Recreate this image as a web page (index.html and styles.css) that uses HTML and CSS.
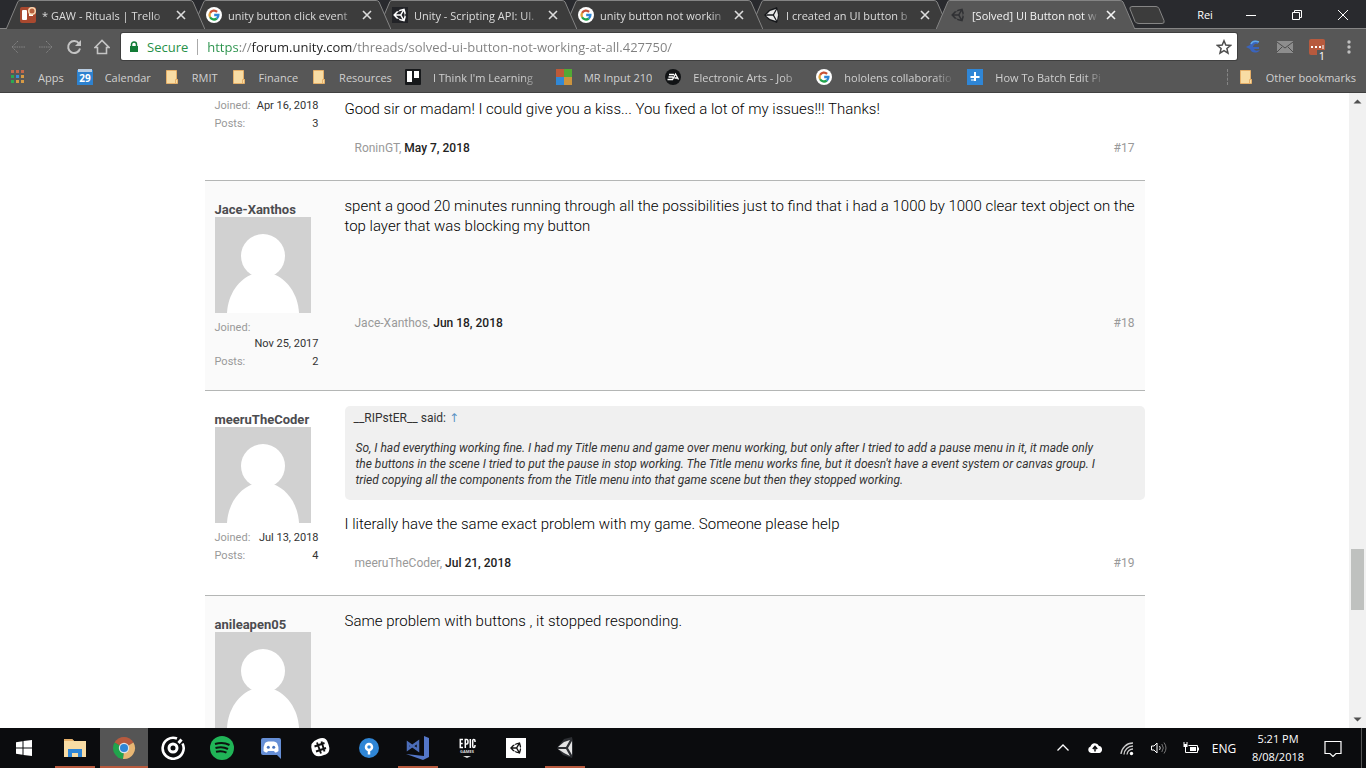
FILE: index.html
```html
<!DOCTYPE html>
<html lang="en">
<head>
<meta charset="utf-8">
<title>[Solved] UI Button not working at all</title>
<link rel="stylesheet" href="styles.css">
</head>
<body>
<svg class="defs" aria-hidden="true">
  <symbol id="google" viewBox="0 0 16 16">
    <circle cx="8" cy="8" r="8" fill="#fff"/>
    <g fill="none" stroke-width="2.3">
      <path d="M11.1 4.8A4.5 4.5 0 0 0 4.1 5.8" stroke="#c95337"/>
      <path d="M4.1 5.8a4.5 4.5 0 0 0 0 4.4" stroke="#e0a13d"/>
      <path d="M4.1 10.2a4.5 4.5 0 0 0 6.7 1.3" stroke="#21a44c"/>
      <path d="M10.8 11.5A4.5 4.5 0 0 0 12.4 8H8.2" stroke="#2f86d6"/>
    </g>
  </symbol>
  <symbol id="unity" viewBox="1 1 20 22">
    <path d="M9.11 17H6.5l-4.91-5L6.5 7h2.61l1.31-2.26L17.21 3l1.87 6.74L17.77 12l1.31 2.26L17.21 21l-6.79-1.74L9.11 17m.14-.25l5.13 1.38L11.42 13H5.5l3.75 3.75m6.87.38l1.38-5.13-1.38-5.13L13.15 12l2.97 5.13M9.25 7.25L5.5 11h5.92l2.96-5.13-5.13 1.38z"/>
  </symbol>
  <symbol id="unity-solid" viewBox="0 0 16 16">
    <path d="M0 8L5 3l8-3 2 7-1 1 1 1-2 7-8-3z" fill="#15171a"/>
    <path d="M2 8l4-4 6-2-3 5.200H2zM2 8.800h7L12 14l-6-2zM10 8l3-5.500L14 8l-1 5.500z" fill="#e8e8e8"/>
  </symbol>
  <symbol id="close" viewBox="0 0 10 10"><path d="M1 1l8 8M9 1L1 9" fill="none" stroke="currentColor" stroke-width="1.6"/></symbol>
  <symbol id="tab" viewBox="0 0 200 29" preserveAspectRatio="none"><path d="M0 29.500L12 1.500Q13 .5 14 .5H185Q187 .5 188 2L200 29.500"/></symbol>
  <symbol id="folder" viewBox="0 0 16 16"><path d="M2.500 1.500h10v9h1v4h-11z" fill="#f8dca4" stroke="#e6b069"/><path d="M11.500 14v-3.500h2" fill="none" stroke="#e6b069"/></symbol>
  <symbol id="avatar" viewBox="0 0 96 96"><path fill="#d1d1d1" d="M0 0h96v96H0z"/><circle cx="48" cy="39" r="22" fill="#fff"/><path d="M12 96C13 77 24 62 38 57h20c14 5 25 20 26 39z" fill="#fff"/></symbol>
</svg>

<header class="browser">
  <div class="tabstrip">
    <div class="tabs">
      <div class="tab"><svg class="shape"><use href="#tab"/></svg><div class="tab-in">
        <svg class="fav" viewBox="0 0 16 16"><rect width="16" height="16" rx="2" fill="#a9492f"/><rect x="2" y="3" width="5" height="10" rx="1" fill="#fff"/><path d="M9 6h4v3H9z" fill="#fff"/><circle cx="12" cy="4" r="4" fill="#f5d8b2"/><circle cx="12" cy="4" r="2.500" fill="#b9603d"/></svg>
        <span class="title">* GAW - Rituals | Trello</span><button class="x" aria-label="Close tab"><svg><use href="#close"/></svg></button></div></div>
      <div class="tab"><svg class="shape"><use href="#tab"/></svg><div class="tab-in">
        <svg class="fav"><use href="#google"/></svg><span class="title">unity button click event</span><button class="x" aria-label="Close tab"><svg><use href="#close"/></svg></button></div></div>
      <div class="tab"><svg class="shape"><use href="#tab"/></svg><div class="tab-in">
        <svg class="fav dark-fav"><use href="#unity"/></svg><span class="title">Unity - Scripting API: UI.</span><button class="x" aria-label="Close tab"><svg><use href="#close"/></svg></button></div></div>
      <div class="tab"><svg class="shape"><use href="#tab"/></svg><div class="tab-in">
        <svg class="fav"><use href="#google"/></svg><span class="title">unity button not workin</span><button class="x" aria-label="Close tab"><svg><use href="#close"/></svg></button></div></div>
      <div class="tab"><svg class="shape"><use href="#tab"/></svg><div class="tab-in">
        <svg class="fav"><use href="#unity-solid"/></svg><span class="title">I created an UI button b</span><button class="x" aria-label="Close tab"><svg><use href="#close"/></svg></button></div></div>
      <div class="tab active"><svg class="shape"><use href="#tab"/></svg><div class="tab-in">
        <svg class="fav faded"><use href="#unity"/></svg><span class="title">[Solved] UI Button not w</span><button class="x" aria-label="Close tab"><svg><use href="#close"/></svg></button></div></div>
    </div>
    <button class="newtab" aria-label="New tab"><svg viewBox="0 0 36 18"><path d="M3 .5h24q2 0 3 2l5 12q1 3-2 3H10q-3 0-4-2L1 3q-1-2 2-2.500z" fill="#3c3c3c" stroke="#858585"/></svg></button>
    <button class="profile">Rei</button>
    <button class="win" aria-label="Minimize"><svg viewBox="0 0 10 10"><path d="M0 5.500h10"/></svg></button>
    <button class="win" aria-label="Restore"><svg viewBox="0 0 10 10"><path d="M.5 2.500h7v7h-7zM2.500 2V.5h7v7H8"/></svg></button>
    <button class="win" aria-label="Close"><svg viewBox="0 0 10 10"><path d="M0 0l10 10M10 0L0 10"/></svg></button>
  </div>

  <div class="toolbar">
    <button class="nav" aria-label="Back"><svg viewBox="0 0 16 16"><path d="M15 8H2M8 2L2 8l6 6" stroke="#858585" stroke-dasharray="1.500 .8"/></svg></button>
    <button class="nav" aria-label="Forward"><svg viewBox="0 0 16 16"><path d="M1 8h13M8 2l6 6-6 6" stroke="#858585" stroke-dasharray="1.500 .8"/></svg></button>
    <button class="nav" aria-label="Reload"><svg viewBox="0 0 16 16"><path d="M13 4.500A6 6 0 1 0 14 9.500" stroke="#c4c4c4" stroke-width="2"/><path d="M15 1v6H9z" fill="#c4c4c4"/></svg></button>
    <button class="nav" aria-label="Home"><svg viewBox="0 0 16 16"><path d="M1 8.500L8 1.500l7 7H12.500V14.500h-9V8.500z" stroke="#c4c4c4" stroke-width="1.600"/></svg></button>
    <div class="omnibox">
      <svg class="lock" viewBox="0 0 10 12"><path d="M1 5h8v6H1z" fill="#137c37"/><path d="M2.500 5V3.500a2.500 2.500 0 0 1 5 0V5" fill="none" stroke="#137c37" stroke-width="1.500"/></svg>
      <span class="secure">Secure</span>
      <input class="url" type="text" aria-label="Address" value="https://forum.unity.com/threads/solved-ui-button-not-working-at-all.427750/">
      <button class="star" aria-label="Bookmark this page"><svg viewBox="0 0 16 16"><path d="M8 1.800l1.800 4.300 4.700.4-3.600 3 1.100 4.600L8 11.700l-4 2.400 1.100-4.600-3.600-3 4.700-.4z" fill="none" stroke="#4d4d4d" stroke-width="1.500"/></svg></button>
    </div>
    <div class="exts">
      <button aria-label="Extension"><svg viewBox="0 0 16 16"><path d="M13 2Q6 0 5 6l-4 2 4 2q2 5 8 3l2-2q-5 2-6-1h5V8H8q1-4 5-3z" fill="#3a64bd"/><path d="M6 5q2-4 8-2" fill="none" stroke="#62a9e8" stroke-width="1.500"/></svg></button>
      <button aria-label="Mail"><svg viewBox="0 0 16 12"><path d="M0 0h16v12H0z" fill="#8d8d8d"/><path d="M0 1l8 6 8-6M0 11l5-5M16 11l-5-5" fill="none" stroke="#4c4c4c"/></svg></button>
      <button class="pass" aria-label="Password manager, 1 match"><svg viewBox="0 0 16 16"><rect width="16" height="16" rx="2" fill="#b75a3e"/><path d="M2 7h2v2H2zM6 7h2v2H6zM10 7h2v2h-2zM13.500 6h1v4h-1z" fill="#fff"/></svg><span>1</span></button>
      <button aria-label="Menu"><svg viewBox="0 0 16 16"><g fill="#c0c0c0"><circle cx="8" cy="3" r="1.700"/><circle cx="8" cy="8" r="1.700"/><circle cx="8" cy="13" r="1.700"/></g></svg></button>
    </div>
  </div>

  <nav class="bookmarks" aria-label="Bookmarks">
    <a href="#"><svg viewBox="0 0 16 16"><path d="M1 1h3v3H1zM6 1h3v3H6zM11 1h3v3h-3z" fill="#c4674a"/><path d="M1 6h3v3H1zM1 11h3v3H1z" fill="#2aa952"/><path d="M6 6h3v3H6z" fill="#388fd9"/><path d="M11 6h3v3h-3zM6 11h3v3H6zM11 11h3v3h-3z" fill="#d79a44"/></svg><span>Apps</span></a>
    <a href="#"><svg viewBox="0 0 16 16"><path d="M0 1h16v15H0z" fill="#2d82d0"/><path d="M1 0h14v3H1z" fill="#b8cde3"/><text x="8" y="13" text-anchor="middle" class="cal">29</text></svg><span>Calendar</span></a>
    <a href="#"><svg><use href="#folder"/></svg><span>RMIT</span></a>
    <a href="#"><svg><use href="#folder"/></svg><span>Finance</span></a>
    <a href="#"><svg><use href="#folder"/></svg><span>Resources</span></a>
    <a href="#" class="long"><svg viewBox="0 0 16 16"><rect width="16" height="16" rx="1" fill="#17191b"/><path d="M2 2h5v11H2zM9 2h5v7H9z" fill="#fff"/></svg><span>I Think I'm Learning</span></a>
    <a href="#"><svg viewBox="0 0 16 16"><path d="M0 0h8v8H0z" fill="#bd5a39"/><path d="M8 0h8v8H8z" fill="#52a935"/><path d="M0 8h8v8H0z" fill="#3188d6"/><path d="M8 8h8v8H8z" fill="#cc943e"/></svg><span>MR Input 210</span></a>
    <a href="#" class="long"><svg viewBox="0 0 16 16"><circle cx="8" cy="8" r="8" fill="#111315"/><path d="M4 5.500h5M3.500 8h4.500M2.500 10.500h5L10.500 5l3 5.500M9.500 9h3" fill="none" stroke="#fff" stroke-width="1.300"/></svg><span>Electronic Arts - Job</span></a>
    <a href="#" class="long"><svg><use href="#google"/></svg><span>hololens collaboratio</span></a>
    <a href="#" class="long"><svg viewBox="0 0 16 16"><path d="M0 0h16v16H0z" fill="#2f86d6"/><path d="M8 3v9M3.500 8h9" stroke="#fff" stroke-width="2"/><path d="M4 11h5" stroke="#fff"/></svg><span>How To Batch Edit Pi</span></a>
    <a href="#" class="other"><svg><use href="#folder"/></svg><span>Other bookmarks</span></a>
  </nav>
</header>

<div class="page">
  <main class="thread">
    <article class="post clipped">
      <aside class="user">
        <dl><div><dt>Joined:</dt><dd>Apr 16, 2018</dd></div><div><dt>Posts:</dt><dd>3</dd></div></dl>
      </aside>
      <div class="body">
        <p class="message">Good sir or madam! I could give you a kiss... You fixed a lot of my issues!!! Thanks!</p>
        <footer><span><a href="#">RoninGT,</a> <b>May 7, 2018</b></span><a href="#">#17</a></footer>
      </div>
    </article>
    <article class="post alt">
      <aside class="user">
        <a class="name" href="#">Jace-Xanthos</a>
        <svg class="avatar"><use href="#avatar"/></svg>
        <dl><div><dt>Joined:</dt><dd>Nov 25, 2017</dd></div><div><dt>Posts:</dt><dd>2</dd></div></dl>
      </aside>
      <div class="body">
        <p class="message">spent a good 20 minutes running through all the possibilities just to find that i had a 1000 by 1000 clear text object on the top layer that was blocking my button</p>
        <footer><span><a href="#">Jace-Xanthos,</a> <b>Jun 18, 2018</b></span><a href="#">#18</a></footer>
      </div>
    </article>
    <article class="post">
      <aside class="user">
        <a class="name" href="#">meeruTheCoder</a>
        <svg class="avatar"><use href="#avatar"/></svg>
        <dl><div><dt>Joined:</dt><dd>Jul 13, 2018</dd></div><div><dt>Posts:</dt><dd>4</dd></div></dl>
      </aside>
      <div class="body">
        <div class="message">
          <blockquote>
            <div class="said">__RIPstER__ said: <a href="#">↑</a></div>
            <p>So, I had everything working fine. I had my Title menu and game over menu working, but only after I tried to add a pause menu in it, it made only the buttons in the scene I tried to put the pause in stop working. The Title menu works fine, but it doesn't have a event system or canvas group. I tried copying all the components from the Title menu into that game scene but then they stopped working.</p>
          </blockquote>
          <p>I literally have the same exact problem with my game. Someone please help</p>
        </div>
        <footer><span><a href="#">meeruTheCoder,</a> <b>Jul 21, 2018</b></span><a href="#">#19</a></footer>
      </div>
    </article>
    <article class="post alt">
      <aside class="user">
        <a class="name" href="#">anileapen05</a>
        <svg class="avatar"><use href="#avatar"/></svg>
      </aside>
      <div class="body">
        <p class="message">Same problem with buttons , it stopped responding.</p>
      </div>
    </article>
  </main>
  <div class="scrollbar" aria-hidden="true">
    <svg viewBox="0 0 17 17"><path d="M4.500 10.500h8l-4-4z" fill="#505050"/></svg>
    <div class="track"><div class="thumb"></div></div>
    <svg viewBox="0 0 17 17"><path d="M4.500 6.500h8l-4 4z" fill="#505050"/></svg>
  </div>
</div>

<footer class="taskbar">
  <button class="start" aria-label="Start"><svg viewBox="0 0 24 24"><path d="M4 6.300l6.500-1v6.200H4zM11.500 5.100L20 4v7.500h-8.500zM4 12.500h6.500v6.200L4 17.700zM11.500 12.500H20V20l-8.500-1.100z" fill="#fff"/></svg></button>
  <button class="open" aria-label="File Explorer"><svg viewBox="0 0 24 24"><path d="M1 3h8l2 2h12v16H1z" fill="#f8dca4"/><path d="M1 3h8l2 2H1z" fill="#e6b069"/><path d="M5 21v-8h14v8h-4v-4H9v4z" fill="#2f86d6"/></svg></button>
  <button class="current" aria-label="Chrome"><svg viewBox="0 0 24 24"><path d="M12 12L2.500 6.500A11 11 0 0 1 21.500 6.500z" fill="#b75a3e"/><path d="M12 12l9.500-5.500A11 11 0 0 1 11 23z" fill="#e8b673"/><path d="M12 12L11 23A11 11 0 0 1 2.500 6.500z" fill="#21a44c"/><circle cx="12" cy="12" r="5.200" fill="#dfe4ea"/><circle cx="12" cy="12" r="4" fill="#2f86d6"/></svg></button>
  <button aria-label="Groove Music"><svg viewBox="0 0 24 24" fill="none" stroke="#fff"><path d="M16 2.500A10.500 10.500 0 1 0 21.500 7.500" stroke-width="2.600"/><circle cx="12" cy="12" r="4" stroke-width="3"/><path d="M17.500 7L20.500 3.500" stroke-width="3"/></svg></button>
  <button aria-label="Spotify"><svg viewBox="0 0 24 24"><circle cx="12" cy="12" r="12" fill="#20b557"/><path d="M5 8q8-2.500 14.500 1M5.500 12q7-2 12.500 1M6 15.700q6-1.500 10.500 1" fill="none" stroke="#0c1510" stroke-width="2"/></svg></button>
  <button aria-label="Discord"><svg viewBox="0 0 24 24"><path d="M4 2h16q2 0 2 2v19l-4-4H4q-2 0-2-2V4q0-2 2-2z" fill="#668fd6"/><path d="M6 7q2-2 4-1.500h4q2-.5 4 1.500 2 4 1.500 8Q17 17 16 16.500l-1-1.500H9l-1 1.500q-1 .5-3.500-1.500Q4 11 6 7z" fill="#fff"/><circle cx="9.300" cy="11.200" r="1.500" fill="#4773bd"/><circle cx="14.700" cy="11.200" r="1.500" fill="#4773bd"/></svg></button>
  <button aria-label="Slack"><svg viewBox="0 0 24 24"><path d="M10 3q8-3 10 4 4 10-4 12-9 4-12-4Q1 6 10 3z" fill="#fff"/><path d="M9 6.500l4 11M13.500 5.500l3 10M6.500 10.500l10-3.500M8 15.500l10-3.500" stroke="#111" stroke-width="1.900"/></svg></button>
  <button aria-label="Sourcetree"><svg viewBox="0 0 24 24"><circle cx="12" cy="12" r="10" fill="#2f86d6"/><circle cx="12" cy="11" r="3" fill="none" stroke="#fff" stroke-width="2.500"/><path d="M12 14v4.500" stroke="#fff" stroke-width="2.500"/></svg></button>
  <button class="open" aria-label="Visual Studio"><svg viewBox="0 0 24 24"><path d="M18 0l5 2v19l-6 3L0 18l18 2z" fill="#5477c8"/><path d="M2 7l10 7V6L2 13z" fill="none" stroke="#4c6db9" stroke-width="2.500"/></svg></button>
  <button aria-label="Epic Games"><svg viewBox="0 0 24 24"><g fill="none" stroke="#fff" stroke-width="1.500"><path d="M8 3.500H5.300v8H8M5.300 7.500h2.400M10.300 12V3.500h1.500q1.200 0 1.200 2.200t-1.200 2.200h-1.500M15.300 3v9M20 6V5q0-1.500-1.200-1.500T17.700 5v5q0 1.500 1.100 1.500T20 10V9"/></g><text x="12" y="17" text-anchor="middle" class="epic">GAMES</text><path d="M8 20h8l-4 2z" fill="#ddd"/></svg></button>
  <button aria-label="Unity Hub"><svg viewBox="0 0 24 24"><path d="M2 2h20v20H2z" fill="#fff"/><use href="#unity" x="5" y="5" width="14" height="14" fill="#111"/></svg></button>
  <button class="open" aria-label="Unity"><svg viewBox="0 0 24 24"><path d="M4 12l7-9 8-2 1 5v12l-1 4-9-3z" fill="#2d2f33"/><path d="M5 11l6-5 6-2-4 7zM5 13h8l4 7-6-3zM15 12l4-7v14z" fill="#e4e4e4"/></svg></button>
  <div class="tray">
    <button aria-label="Show hidden icons"><svg viewBox="0 0 16 16"><path d="M2.500 10.500L8 5l5.500 5.500" fill="none" stroke="#fff" stroke-width="1.300"/></svg></button>
    <button aria-label="Cloud backup"><svg viewBox="0 0 16 16"><path d="M4 13a4 3.500 0 0 1-.5-6.500 4.500 4.500 0 0 1 8.500-.5A3.600 3.600 0 0 1 12.500 13z" fill="#fff"/><path d="M8 11.500v-4M5.800 9L8 6.500 10.200 9" fill="none" stroke="#0b0c0e" stroke-width="1.500"/></svg></button>
    <button aria-label="Wi-Fi"><svg viewBox="0 0 16 16"><g fill="none" stroke="#ccc" stroke-width="1.300"><path d="M2 14A12 12 0 0 1 14 3M5 14.500A9 9 0 0 1 14 6M8 14.500A6 6 0 0 1 14 9"/></g><circle cx="12.500" cy="13.500" r="1.700" fill="#fff"/></svg></button>
    <button aria-label="Volume"><svg viewBox="0 0 16 16"><path d="M.5 6H3l3-3v10l-3-3H.5z" fill="none" stroke="#fff"/><path d="M8.500 6q1.500 2 0 4" fill="none" stroke="#ddd"/><path d="M10.800 4q3 4 0 8M13 2.500q4 5.500 0 11" fill="none" stroke="#777"/></svg></button>
    <button aria-label="Battery"><svg viewBox="0 0 16 16"><path d="M5.500 5.500h9v7h-9M15.500 7.500v3" fill="none" stroke="#fff"/><path d="M7 7h6v4H7zM.5 4h4v3h-4z" fill="#fff"/><path d="M1 2v2M4 2v2M2.500 7v5.500H6" fill="none" stroke="#fff"/></svg></button>
    <button class="lang">ENG</button>
    <button class="clock"><span>5:21 PM</span><span>8/08/2018</span></button>
    <button class="notes" aria-label="Notifications"><svg viewBox="0 0 18 18"><path d="M1 2.500h16v12h-5l-3 3-3-3H1z" fill="none" stroke="#fff" stroke-width="1.200"/></svg></button>
    <div class="peek"></div>
  </div>
</footer>
</body>
</html>
```

FILE: styles.css
```css
* { box-sizing: border-box; }

body {
  margin: 0;
  height: 100vh;
  display: flex;
  flex-direction: column;
  overflow: hidden;
  background: #fff;
  font-family: "Open Sans", "Noto Sans", sans-serif;
  font-size: 11px;
  color: #333;
}

button {
  display: flex;
  align-items: center;
  justify-content: center;
  padding: 0;
  border: 0;
  background: none;
  color: inherit;
  font: inherit;
}

a { color: inherit; text-decoration: none; }
p, dl, dd, blockquote { margin: 0; }
svg { flex: none; }
.defs { position: absolute; width: 0; height: 0; }

/* Browser frame */
.browser { flex: none; background: #575757; color: #d0d0d0; }

.tabstrip {
  display: flex;
  align-items: stretch;
  height: 29px;
  background: #292a2e;
  box-shadow: inset 0 -1px #858585;
}
.tabs { display: flex; flex: 0 1 1135px; min-width: 0; padding-left: 6px; }
.tab { display: grid; flex: 1 1 0; min-width: 0; margin-right: -13px; position: relative; }
.tab:nth-child(1) { z-index: 5; }
.tab:nth-child(2) { z-index: 4; }
.tab:nth-child(3) { z-index: 3; }
.tab:nth-child(4) { z-index: 2; }
.tab:nth-child(5) { z-index: 1; }
.tab.active { z-index: 6; margin-right: 0; }
.tab > * { grid-area: 1 / 1; }
.shape { width: 100%; height: 29px; fill: #3c3c3c; stroke: #858585; }
.active .shape { fill: #575757; }
.tab-in { display: flex; align-items: center; min-width: 0; padding: 1px 16px 0 14px; color: #dcdcdc; }
.active .tab-in { color: #f4f4f4; }
.fav { width: 16px; height: 16px; margin-right: 6px; }
.dark-fav { background: #222327; fill: #fff; }
.faded { fill: #303134; }
.title {
  flex: 1;
  min-width: 0;
  overflow: hidden;
  white-space: nowrap;
  -webkit-mask-image: linear-gradient(to left, transparent, #000 16px);
  mask-image: linear-gradient(to left, transparent, #000 16px);
}
.x { width: 16px; height: 16px; margin-left: 4px; }
.x svg { width: 10px; height: 10px; }
.newtab { width: 36px; margin-left: -6px; }
.newtab svg { width: 36px; height: 18px; }
.profile { width: 46px; margin-left: auto; color: #fff; }
.win { width: 46px; }
.win svg { width: 10px; height: 10px; fill: none; stroke: #fff; overflow: visible; }

.toolbar { display: flex; align-items: center; height: 35px; padding: 0 4px; }
.nav { width: 28px; height: 28px; }
.nav svg { width: 16px; height: 16px; fill: none; }
.omnibox {
  display: flex;
  align-items: center;
  flex: 1;
  min-width: 0;
  height: 27px;
  margin-left: 5px;
  padding: 0 5px 0 8px;
  border-radius: 2px;
  background: #fff;
  box-shadow: 0 0 0 1px #3f3f3f;
  font-size: 13px;
}
.lock { width: 10px; height: 12px; }
.secure { margin-left: 8px; padding-right: 9px; border-right: 1px solid #aaa; color: #279149; line-height: 16px; }
.url {
  flex: 1;
  min-width: 0;
  margin-left: 9px;
  padding: 0;
  border: 0;
  outline: 0;
  font: inherit;
  color: transparent;
  background: linear-gradient(to right, #279149 33px, #808080 33px, #808080 45px, #222 45px, #222 146px, #808080 146px);
  -webkit-background-clip: text;
  background-clip: text;
}
.star svg { width: 16px; height: 16px; }
.exts { display: flex; width: 125px; justify-content: space-between; padding: 0 5px 0 8px; }
.exts button { width: 16px; height: 16px; }
.exts svg { width: 16px; max-height: 16px; }
.pass { position: relative; }
.pass span { position: absolute; right: -2px; bottom: -6px; padding: 0 2px; background: #575757; color: #fff; line-height: 11px; }

.bookmarks { display: flex; align-items: center; gap: 13px; height: 29px; padding: 0 10px 2px; border-bottom: 1px solid #404040; }
.bookmarks a { display: flex; align-items: center; gap: 12px; min-width: 0; }
.bookmarks svg { width: 16px; height: 16px; }
.bookmarks span { overflow: hidden; white-space: nowrap; }
.bookmarks .long span {
  width: 110px;
  -webkit-mask-image: linear-gradient(to right, #000 90px, transparent 110px);
  mask-image: linear-gradient(to right, #000 90px, transparent 110px);
}
.bookmarks .other { margin-left: auto; padding-left: 10px; border-left: 1px dashed #858585; }
.cal { fill: #fff; font-size: 10px; font-weight: 700; }

/* Forum page */
.page { display: flex; flex: 1; min-height: 0; overflow: hidden; font-family: Roboto, sans-serif; }
.thread { flex: 0 1 940px; min-width: 0; margin: 0 auto; }
.post { display: flex; padding-left: 10px; border-bottom: 1px solid #b4b6b5; }
.alt { background: #fafafa; }
.user { flex: none; width: 104px; padding: 21px 0 20px; line-height: 16px; }
.name { display: block; font-size: 13px; font-weight: 700; line-height: 15px; color: #4c4c50; }
.avatar { display: block; width: 96px; height: 96px; margin-bottom: 7px; }
dl { display: grid; gap: 2px; }
dl div { display: flex; flex-wrap: wrap; column-gap: 5px; }
dt { color: #999; }
dd { margin-left: auto; }
.body { flex: 1; min-width: 0; margin-left: 26px; padding: 15px 0 24px; }
.message { font-size: 15px; font-weight: 300; line-height: 20px; color: #000; }
.alt .message { min-height: 98px; }
.body footer { display: flex; justify-content: space-between; margin-top: 21px; padding: 0 10px; font-size: 12px; line-height: 16px; color: #999; }
.body footer b { font-weight: 500; color: #222; }
.clipped .user { padding-top: 5px; }
.clipped .body { padding-top: 6px; }
blockquote { margin-bottom: 14px; padding: 4px 40px 12px 9px; border-radius: 5px; background: #f0f0f0; font-size: 12px; font-weight: 400; line-height: 16px; color: #333; }
blockquote p { margin: 14px 0 0 2px; font-style: italic; }
.said a { color: #5b93c4; font-family: "DejaVu Sans", sans-serif; }

.scrollbar { display: flex; flex-direction: column; flex: none; width: 17px; background: #f1f1f1; }
.scrollbar svg { width: 17px; height: 17px; }
.track { flex: 1; display: grid; grid-template-rows: 439fr 61fr 101fr; }
.thumb { grid-row: 2; margin: 0 2px; background: #bfc1bf; }

/* Taskbar */
.taskbar { display: flex; flex: none; gap: 1px; height: 40px; background: #0b0c0e; color: #fff; }
.taskbar > button { width: 48px; }
.taskbar > button svg { width: 24px; height: 24px; }
.start { margin-right: 2px; }
.open { background: linear-gradient(#b75a3e, #b75a3e) center bottom / 40px 2px no-repeat; }
.current { background: #555; box-shadow: inset 0 -2px #b75a3e; }
.epic { fill: #ddd; font: 700 4px "Open Sans", sans-serif; }
.tray { display: flex; margin-left: auto; }
.tray button { width: 32px; }
.tray svg { width: 16px; height: 16px; }
.tray .lang { width: 34px; font-size: 12px; }
.tray .clock { flex-direction: column; width: 74px; line-height: 18px; }
.tray .notes { width: 36px; }
.notes svg { width: 18px; height: 18px; }
.peek { width: 5px; margin-left: 10px; border-left: 1px solid #555; }
```
